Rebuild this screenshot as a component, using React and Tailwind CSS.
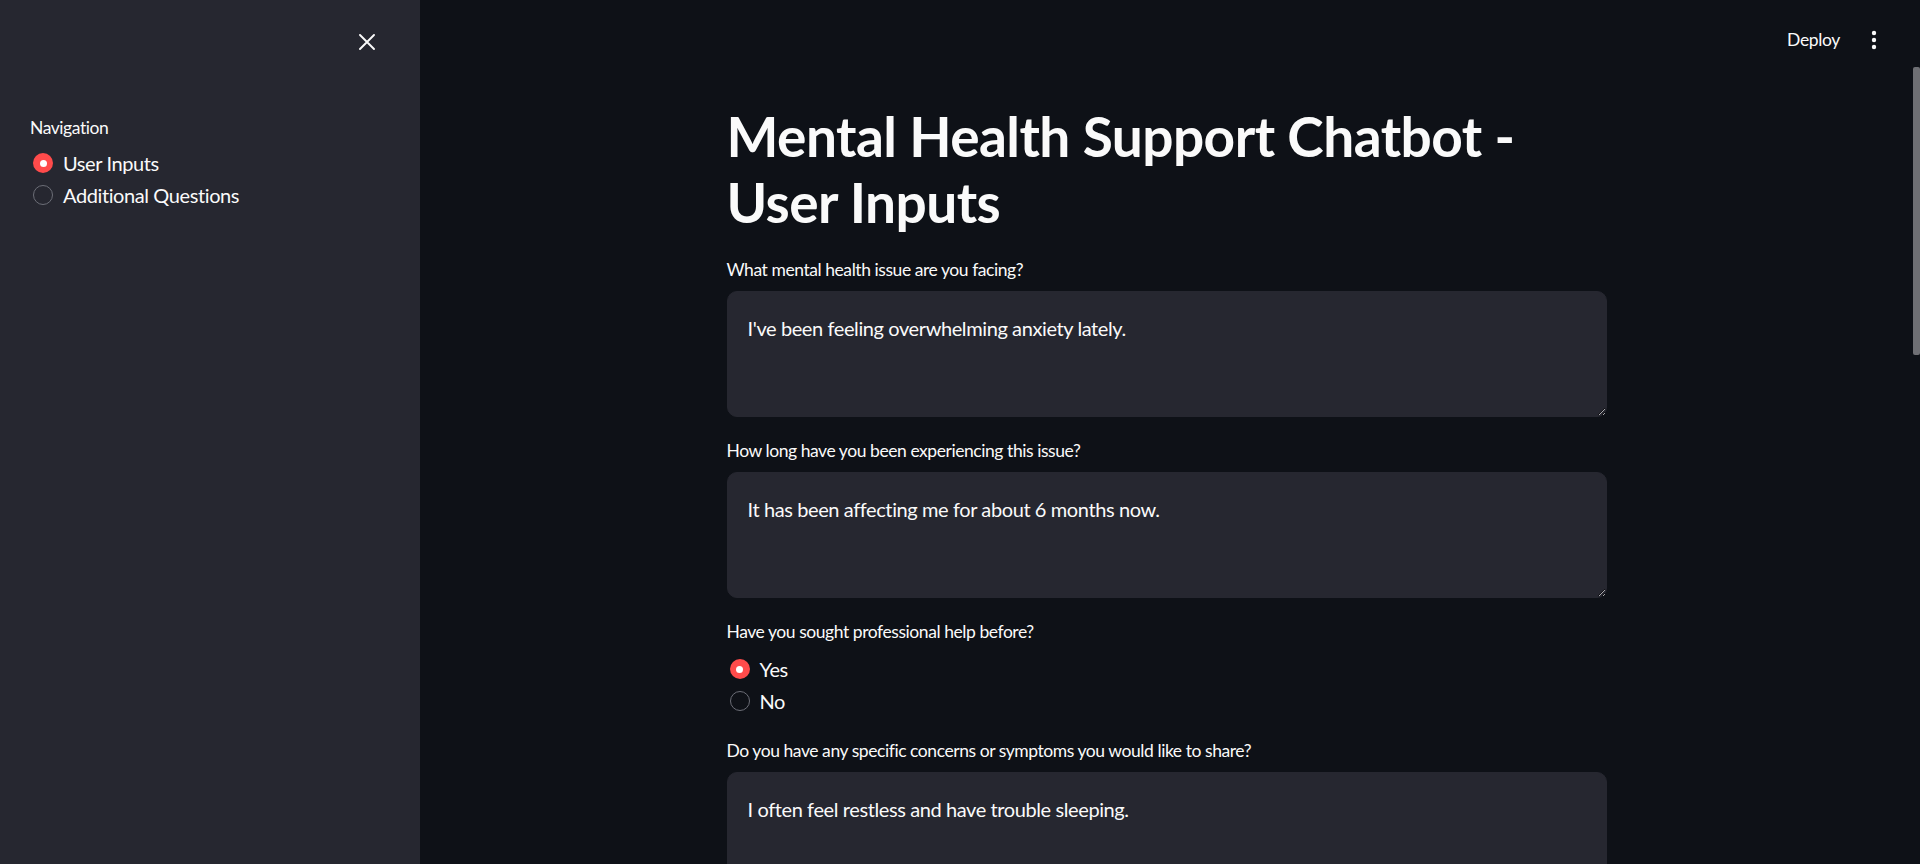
import React from "react";

const FONT = { fontFamily: "Lato, 'Noto Sans', sans-serif" };

function Radio({ checked, label, onSidebar }) {
  return (
    <div className="flex h-[32px] items-center">
      <div className="flex w-[33px] items-center pl-[3px]">
        {checked ? (
          <span className="flex h-[20px] w-[20px] items-center justify-center rounded-full bg-[#ff4b4b]">
            <span className="h-[7px] w-[7px] rounded-full bg-white" />
          </span>
        ) : (
          <span
            className={
              "h-[20px] w-[20px] rounded-full border-[1.5px] border-[#6c6e77] " +
              (onSidebar ? "bg-[#262730]" : "bg-[#0e1117]")
            }
          />
        )}
      </div>
      <span className="text-[20px] leading-[32px] tracking-[-0.02em] text-[#fafafa]">{label}</span>
    </div>
  );
}

function Label({ children }) {
  return (
    <div className="mb-[5px] flex min-h-[30px] items-start">
      <p className="text-[17.5px] leading-[28px] tracking-[-0.025em] text-[#fafafa]">{children}</p>
    </div>
  );
}

function TextBlock({ label, value }) {
  return (
    <div className="flex flex-col">
      <Label>{label}</Label>
      <textarea
        readOnly
        defaultValue={value}
        style={FONT}
        className="h-[126px] w-full resize-y rounded-[10px] border border-[#262730] bg-[#262730] px-[20px] py-[20px] text-[20px] leading-[32px] tracking-[-0.02em] text-[#fafafa] outline-none"
      />
    </div>
  );
}

export default function App() {
  return (
    <div style={FONT} className="flex h-screen w-full overflow-hidden bg-[#0e1117]">
      {/* Sidebar */}
      <aside className="flex w-[420px] shrink-0 flex-col bg-[#262730] px-[30px]">
        <div className="flex h-[84px] items-center justify-end pr-[15px]">
          <svg width="16" height="16" viewBox="0 0 16 16" className="text-[#fafafa]">
            <path d="M1 1 L15 15 M15 1 L1 15" stroke="currentColor" strokeWidth="1.9" strokeLinecap="round" />
          </svg>
        </div>
        <div className="mt-[30px] flex flex-col">
          <Label>Navigation</Label>
          <div className="-mt-[2px] flex flex-col">
            <Radio checked label="User Inputs" onSidebar />
            <Radio label="Additional Questions" onSidebar />
          </div>
        </div>
      </aside>

      {/* Main */}
      <main className="relative flex min-w-0 flex-1 flex-col">
        <header className="flex h-[80px] shrink-0 items-center justify-end gap-[31px] pr-[43px]">
          <span className="text-[17.5px] tracking-[-0.02em] text-[#fafafa]">Deploy</span>
          <svg width="6" height="20" viewBox="0 0 6 20" className="text-[#fafafa]">
            <circle cx="3" cy="3" r="2.2" fill="currentColor" />
            <circle cx="3" cy="10" r="2.2" fill="currentColor" />
            <circle cx="3" cy="17" r="2.2" fill="currentColor" />
          </svg>
        </header>

        <div className="flex justify-center pr-[7px]">
          <div className="flex w-[880px] flex-col gap-[20px]">
            <h1 className="mt-[23px] mb-[1px] text-[55px] font-bold leading-[66px] tracking-[-0.01em] text-[#fafafa]">
              Mental Health Support Chatbot - User Inputs
            </h1>

            <TextBlock
              label="What mental health issue are you facing?"
              value="I've been feeling overwhelming anxiety lately."
            />
            <TextBlock
              label="How long have you been experiencing this issue?"
              value="It has been affecting me for about 6 months now."
            />

            <div className="flex flex-col">
              <Label>Have you sought professional help before?</Label>
              <div className="flex flex-col">
                <Radio checked label="Yes" />
                <Radio label="No" />
              </div>
            </div>

            <TextBlock
              label="Do you have any specific concerns or symptoms you would like to share?"
              value="I often feel restless and have trouble sleeping."
            />
          </div>
        </div>

        {/* scrollbar thumb overlay */}
        <div className="absolute right-0 top-[67px] h-[288px] w-[7px] rounded-[2px] bg-[#6e6f74]" />
      </main>
    </div>
  );
}
